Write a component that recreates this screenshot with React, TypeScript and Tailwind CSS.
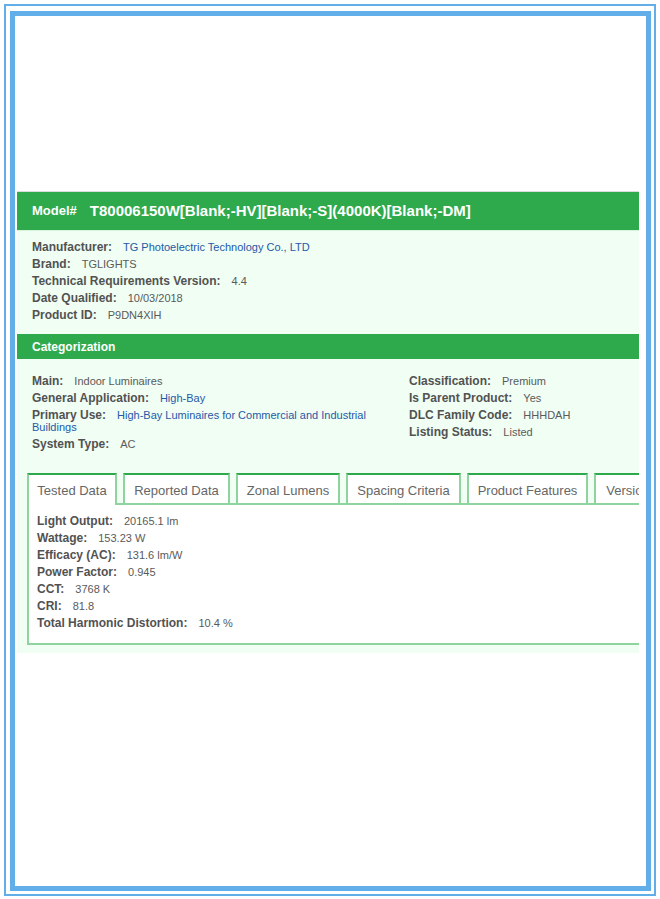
import React from 'react';

const font = { fontFamily: '"Liberation Sans", Arial, sans-serif' };

type Row = { label: string; value: string; link?: boolean };

const details: Row[] = [
  { label: 'Manufacturer:', value: 'TG Photoelectric Technology Co., LTD', link: true },
  { label: 'Brand:', value: 'TGLIGHTS' },
  { label: 'Technical Requirements Version:', value: '4.4' },
  { label: 'Date Qualified:', value: '10/03/2018' },
  { label: 'Product ID:', value: 'P9DN4XIH' },
];

const catLeft: Row[] = [
  { label: 'Main:', value: 'Indoor Luminaires' },
  { label: 'General Application:', value: 'High-Bay', link: true },
  { label: 'Primary Use:', value: 'High-Bay Luminaires for Commercial and Industrial Buildings', link: true },
  { label: 'System Type:', value: 'AC' },
];

const catRight: Row[] = [
  { label: 'Classification:', value: 'Premium' },
  { label: 'Is Parent Product:', value: 'Yes' },
  { label: 'DLC Family Code:', value: 'HHHDAH' },
  { label: 'Listing Status:', value: 'Listed' },
];

const tested: Row[] = [
  { label: 'Light Output:', value: '20165.1 lm' },
  { label: 'Wattage:', value: '153.23 W' },
  { label: 'Efficacy (AC):', value: '131.6 lm/W' },
  { label: 'Power Factor:', value: '0.945' },
  { label: 'CCT:', value: '3768 K' },
  { label: 'CRI:', value: '81.8' },
  { label: 'Total Harmonic Distortion:', value: '10.4 %' },
];

const tabs = [
  { name: 'Tested Data', w: 'w-[90px]' },
  { name: 'Reported Data', w: 'w-[107px]' },
  { name: 'Zonal Lumens', w: 'w-[104px]' },
  { name: 'Spacing Criteria', w: 'w-[115px]' },
  { name: 'Product Features', w: 'w-[121px]' },
  { name: 'Version History', w: 'w-[112px]' },
];

function Field({ row }: { row: Row }) {
  return (
    <div className="mb-[5px] text-[12px] leading-[12px]">
      <span className="font-bold leading-[12px] text-[#525252]">{row.label}</span>
      <span className="ml-[11px] text-[11px] leading-[12px]" style={{ color: row.link ? '#2559a8' : '#5a5a5a' }}>
        {row.value}
      </span>
    </div>
  );
}

export default function App() {
  return (
    <div className="h-[899px] w-[660px] bg-white" style={font}>
      <div className="ml-[4px] pt-[4px]">
        <div className="h-[892px] w-[652px] border-2 border-[#62aee9] pl-[4px] pt-[5px]">
          <div className="h-[880px] w-[641px] border-[5px] border-[#62aee9] pl-[2px] pt-[175px]">
            <div className="w-[622px] overflow-hidden">
              <div className="w-[760px] border-t border-[#dcdcdc] bg-[#f0fef4]">
                {/* Model header */}
                <div className="flex h-[38px] items-center bg-[#2eaa4c] pl-[15px] text-white">
                  <span className="text-[13px] font-bold">Model#</span>
                  <span className="ml-[13px] text-[15px] font-bold">T80006150W[Blank;-HV][Blank;-S](4000K)[Blank;-DM]</span>
                </div>
                <div className="border-t border-[#d6f3de] pl-[15px] pt-[10px] pb-[8px]">
                  {details.map((r) => (
                    <Field key={r.label} row={r} />
                  ))}
                </div>

                {/* Categorization */}
                <div className="flex h-[25px] items-center bg-[#2eaa4c] pl-[15px] text-[12px] font-bold text-white">
                  Categorization
                </div>
                <div className="flex pl-[15px] pt-[16px]">
                  <div className="w-[377px] pr-[12px]">
                    {catLeft.map((r) => (
                      <Field key={r.label} row={r} />
                    ))}
                  </div>
                  <div>
                    {catRight.map((r) => (
                      <Field key={r.label} row={r} />
                    ))}
                  </div>
                </div>

                {/* Tabs */}
                <div className="pl-[10px] pt-[18px] pb-[8px]">
                  <div className="flex items-end gap-[6px]">
                    {tabs.map((t, i) => (
                      <div
                        key={t.name}
                        className={
                          i === 0
                            ? `relative z-10 -mb-[2px] flex h-[32px] shrink-0 justify-center border-2 border-b-0 border-[#8fd49f] border-t-[#2eaa4c] bg-white pt-[6px] text-[13px] whitespace-nowrap text-[#666666] ${t.w}`
                            : `flex h-[30px] shrink-0 justify-center border-2 border-b-0 border-[#8fd49f] border-t-[#2eaa4c] bg-white pt-[6px] text-[13px] whitespace-nowrap text-[#666666] ${t.w}`
                        }
                      >
                        {t.name}
                      </div>
                    ))}
                  </div>
                  <div className="border-2 border-[#8fd49f] bg-white pl-[8px] pt-[10px] pb-[9px]">
                    {tested.map((r) => (
                      <Field key={r.label} row={r} />
                    ))}
                  </div>
                </div>
              </div>
            </div>
          </div>
        </div>
      </div>
    </div>
  );
}
